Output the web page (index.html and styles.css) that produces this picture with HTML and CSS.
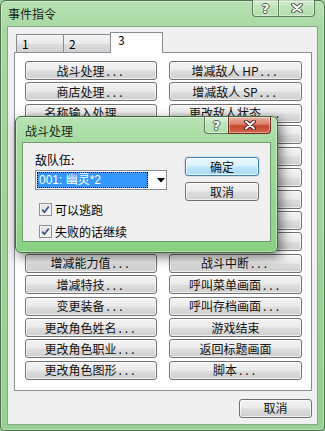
FILE: index.html
```html
<!DOCTYPE html>
<html lang="zh">
<head>
<meta charset="utf-8">
<title>事件指令</title>
<link rel="stylesheet" href="styles.css">
</head>
<body>
<div class="win">
  <div class="titlebar">
    <span class="title">事件指令</span>
    <div class="caps">
      <span class="cap help">?</span>
      <span class="cap close"><svg width="14" height="10" viewBox="0 0 14 10"><path d="M3 1.5 L11 8.5 M11 1.5 L3 8.5" stroke="#4d5a4d" stroke-width="4" stroke-linecap="round"/><path d="M3 1.5 L11 8.5 M11 1.5 L3 8.5" stroke="#fff" stroke-width="2" stroke-linecap="round"/></svg></span>
    </div>
  </div>
  <div class="client">
    <div class="tabs">
      <div class="tab">1</div>
      <div class="tab">2</div>
      <div class="tab sel">3</div>
    </div>
    <div class="panel">
      <div class="grid">
        <div class="btn">战斗处理<span class="dots">...</span></div>
        <div class="btn">增减敌人 HP<span class="dots">...</span></div>
        <div class="btn">商店处理<span class="dots">...</span></div>
        <div class="btn">增减敌人 SP<span class="dots">...</span></div>
        <div class="btn">名称输入处理<span class="dots">...</span></div>
        <div class="btn">更改敌人状态<span class="dots">...</span></div>
        <div class="btn"></div>
        <div class="btn"></div>
        <div class="btn"></div>
        <div class="btn"></div>
        <div class="btn"></div>
        <div class="btn"></div>
        <div class="btn"></div>
        <div class="btn"></div>
        <div class="btn"></div>
        <div class="btn"></div>
        <div class="btn"></div>
        <div class="btn"></div>
        <div class="btn">增减能力值<span class="dots">...</span></div>
        <div class="btn">战斗中断<span class="dots">...</span></div>
        <div class="btn">增减特技<span class="dots">...</span></div>
        <div class="btn">呼叫菜单画面<span class="dots">...</span></div>
        <div class="btn">变更装备<span class="dots">...</span></div>
        <div class="btn">呼叫存档画面<span class="dots">...</span></div>
        <div class="btn">更改角色姓名<span class="dots">...</span></div>
        <div class="btn">游戏结束</div>
        <div class="btn">更改角色职业<span class="dots">...</span></div>
        <div class="btn">返回标题画面</div>
        <div class="btn">更改角色图形<span class="dots">...</span></div>
        <div class="btn">脚本<span class="dots">...</span></div>
      </div>
    </div>
    <div class="footer">
      <div class="btn cancel">取消</div>
    </div>
  </div>
</div>

<div class="dlg">
  <div class="titlebar dtitle">
    <span class="title">战斗处理</span>
    <div class="caps dcaps">
      <span class="cap help">?</span>
      <span class="cap close red"><svg width="14" height="10" viewBox="0 0 14 10"><path d="M3 1.5 L11 8.5 M11 1.5 L3 8.5" stroke="#5a2018" stroke-width="4" stroke-linecap="round"/><path d="M3 1.5 L11 8.5 M11 1.5 L3 8.5" stroke="#fff" stroke-width="2" stroke-linecap="round"/></svg></span>
    </div>
  </div>
  <div class="dclient">
    <div class="dleft">
      <div class="label">敌队伍:</div>
      <div class="combo">
        <span class="selected">001: 幽灵*2</span>
        <svg class="arrow" width="8" height="5" viewBox="0 0 8 5"><path d="M0 0 H8 L4 4.5 Z" fill="#000"/></svg>
      </div>
      <div class="check first"><span class="box"><svg width="11" height="11" viewBox="0 0 11 11"><path d="M2.2 5.6 L4.4 8.2 L8.8 2.4" fill="none" stroke="#3b4f8c" stroke-width="1.7"/></svg></span>可以逃跑</div>
      <div class="check"><span class="box"><svg width="11" height="11" viewBox="0 0 11 11"><path d="M2.2 5.6 L4.4 8.2 L8.8 2.4" fill="none" stroke="#3b4f8c" stroke-width="1.7"/></svg></span>失败的话继续</div>
    </div>
    <div class="dright">
      <div class="btn dbtn default">确定</div>
      <div class="btn dbtn">取消</div>
    </div>
  </div>
</div>
</body>
</html>
```

FILE: styles.css
```css
* { box-sizing: border-box; }
html, body { margin: 0; padding: 0; }
body {
  width: 325px;
  height: 431px;
  overflow: hidden;
  position: relative;
  font-family: "Noto Sans CJK SC", "Noto Sans", sans-serif;
  font-size: 12px;
  color: #000;
  background: #9dd39a;
}

.win {
  width: 325px;
  height: 431px;
  border: 1px solid #4f6f4d;
  border-radius: 6px 6px 4px 4px;
  background: linear-gradient(180deg, #b7e1b2 0px, #a6d9a1 30px, #9fd49a 200px, #97d093 431px);
  padding: 0 6px 5px 6px;
  display: flex;
  flex-direction: column;
  box-shadow: inset 0 0 0 1px rgba(255,255,255,.35);
}

.titlebar {
  height: 25px;
  display: flex;
  justify-content: space-between;
  align-items: flex-start;
  flex: none;
}
.title {
  padding: 5px 0 0 1px;
  font-size: 12px;
  line-height: 16px;
  color: #1a1a1a;
}
.caps {
  display: flex;
  margin-right: 3px;
  margin-top: -1px;
}
.cap {
  height: 17px;
  display: flex;
  align-items: center;
  justify-content: center;
  border: 1px solid rgba(60,85,60,.75);
  border-top: none;
  background: linear-gradient(180deg, rgba(255,255,255,.45), rgba(255,255,255,.12) 50%, rgba(255,255,255,.05));
  box-shadow: inset 0 0 0 1px rgba(255,255,255,.4);
}
.cap.help {
  width: 26px;
  border-radius: 0 0 0 4px;
  border-right: none;
  color: #fff;
  font-family: "DejaVu Sans", sans-serif;
  font-weight: bold;
  font-size: 13px;
  line-height: 13px;
  text-shadow: 1px 0 0 #4d5a4d, -1px 0 0 #4d5a4d, 0 1px 0 #4d5a4d, 0 -1px 0 #4d5a4d;
}
.cap.close {
  width: 37px;
  border-radius: 0 0 4px 0;
}

.client {
  flex: 1;
  background: #f0f0f0;
  border: 1px solid #86a884;
  padding: 5px 5px 0 6px;
  display: flex;
  flex-direction: column;
}

.tabs {
  display: flex;
  align-items: flex-end;
  height: 20px;
  padding-left: 2px;
}
.tab {
  width: 47px;
  height: 18px;
  border: 1px solid #898c95;
  border-bottom: none;
  border-right: none;
  background: linear-gradient(180deg, #f5f5f5, #e9e9e9 50%, #dcdcdc 51%, #d3d3d3);
  padding: 2px 0 0 5px;
  font-size: 12px;
  line-height: 14px;
}
.tab.sel {
  width: 53px;
  height: 21px;
  margin-bottom: -1px;
  background: #fff;
  border-right: 1px solid #898c95;
  padding: 0 0 0 7px;
  position: relative;
  z-index: 1;
}

.panel {
  width: 298px;
  background: #fff;
  border: 1px solid #898c95;
  padding: 8px 0 10px 10px;
}
.grid {
  display: grid;
  grid-template-columns: 132px 133px;
  grid-template-rows: repeat(15, 19px);
  column-gap: 12px;
  row-gap: 2.43px;
}

.btn {
  height: 19px;
  border: 1px solid #707070;
  border-radius: 3px;
  background: linear-gradient(180deg, #f3f3f3 0%, #ebebeb 48%, #dddddd 52%, #cfcfcf 100%);
  box-shadow: inset 0 0 0 1px rgba(255,255,255,.7);
  display: flex;
  align-items: center;
  justify-content: center;
  font-size: 12px;
  line-height: 14px;
  color: #111;
  white-space: nowrap;
}
.dots { letter-spacing: 3px; margin-left: 2px; }

.footer {
  display: flex;
  justify-content: flex-end;
  margin-top: 8px;
}
.cancel { width: 73px; }

/* dialog */
.dlg {
  position: absolute;
  left: 15px;
  top: 116px;
  width: 263px;
  height: 137px;
  border: 1px solid #3f6b3d;
  border-radius: 6px;
  background: linear-gradient(180deg, #b8e3b3 0px, #a4db9f 26px, #94d58e 100px, #86d080 137px);
  padding: 0 6px 10px 6px;
  display: flex;
  flex-direction: column;
  box-shadow: 3px 4px 12px rgba(0,0,0,.55), inset 0 0 0 1px rgba(255,255,255,.4);
  z-index: 5;
}
.dtitle { height: 25px; }
.dtitle .title { padding: 6px 0 0 3px; color: #1a2a1a; }
.dcaps { margin-right: 0; margin-top: 0; }
.dcaps .cap.help { width: 24px; }
.dcaps .cap.close { width: 43px; }
.cap.red {
  background: linear-gradient(180deg, #eab3a6 0%, #db7f6b 45%, #c4452c 55%, #d0664a 100%);
  border-color: #6a2a20;
}

.dclient {
  flex: 1;
  background: #f0f0f0;
  border: 1px solid #6d9c6a;
  display: flex;
  padding: 0 0 0 12px;
}
.dleft {
  width: 132px;
  display: flex;
  flex-direction: column;
}
.label {
  margin-top: 9px;
  line-height: 16px;
  height: 16px;
}
.combo {
  margin-top: 2px;
  height: 20px;
  width: 132px;
  background: #fff;
  border: 1px solid #8a8d94;
  display: flex;
  align-items: center;
  padding: 0 0 0 1px;
  position: relative;
}
.selected {
  width: 111px;
  height: 16px;
  background: #3399ff;
  color: #fff;
  outline: 1px dotted #000;
  outline-offset: -1px;
  line-height: 16px;
  padding-left: 2px;
  white-space: nowrap;
  font-family: "Liberation Sans", "Noto Sans CJK SC", sans-serif;
}
.arrow { margin-left: 9px; }

.check {
  display: flex;
  align-items: center;
  height: 16px;
  margin-top: 6px;
  margin-left: 4px;
  white-space: nowrap;
}
.check.first { margin-top: 11px; }
.box {
  width: 13px;
  height: 13px;
  border: 1px solid #8e8f8f;
  background: linear-gradient(135deg, #dcdcdc, #fbfbfb);
  box-shadow: inset 0 0 0 1px #f4f4f4;
  margin-right: 3px;
  display: flex;
  align-items: center;
  justify-content: center;
  flex: none;
}

.dright {
  margin-left: 18px;
  padding-top: 14px;
  display: flex;
  flex-direction: column;
  gap: 6px;
}
.dbtn { width: 74px; }
.dbtn.default {
  border-color: #3c7fb1;
  background: linear-gradient(180deg, #eaf6fd 0%, #d9f0fc 48%, #bee6fd 52%, #a7d9f5 100%);
  box-shadow: inset 0 0 0 1px rgba(255,255,255,.8), 0 0 2px rgba(60,127,177,.5);
}
```
